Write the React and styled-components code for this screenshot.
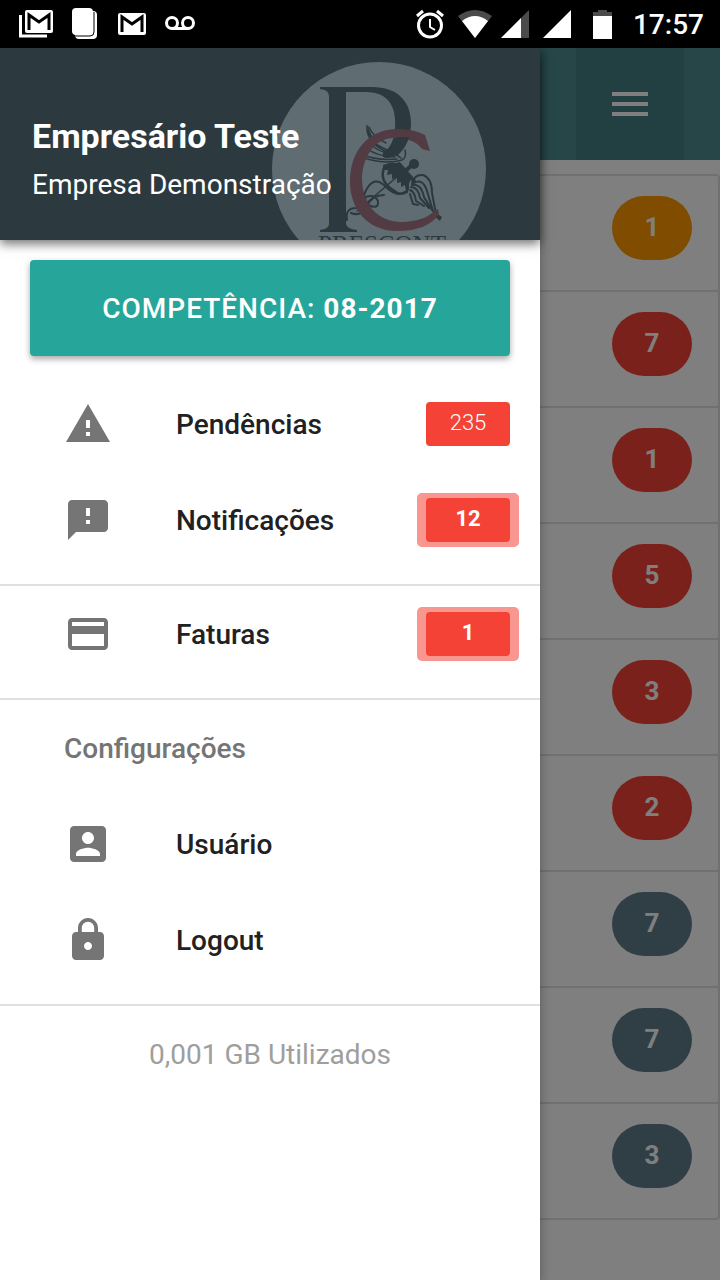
import React from "react";
import styled, { createGlobalStyle, css } from "styled-components";

const GlobalStyle = createGlobalStyle`
  * { box-sizing: border-box; }
  body {
    margin: 0;
    background: #fff;
    font-family: Roboto, "Liberation Sans", sans-serif;
    color: #212121;
  }
  ul { margin: 0; padding: 0; list-style: none; }
  h1, h2, p { margin: 0; }
`;

const Screen = styled.div`
  position: relative;
  display: flex;
  flex-direction: column;
  min-height: 100vh;
  overflow: hidden;
`;

const StatusBar = styled.header`
  display: flex;
  justify-content: space-between;
  align-items: center;
  height: 48px;
  padding: 0 16px 0 18px;
  background: #000;
  color: #fff;
  svg { display: block; }
`;

const StatusGroup = styled.div`
  display: flex;
  align-items: center;
  gap: ${(p) => p.$gap}px;
`;

const Clock = styled.time`
  font-size: 28px;
  line-height: 48px;
  padding-top: 2px;
  font-weight: 500;
`;

const Content = styled.div`
  position: relative;
  flex: 1;
  background: #fff;
`;

const NavBar = styled.nav`
  display: flex;
  justify-content: flex-end;
  height: 112px;
  padding-right: 36px;
  background: #4c8c90;
`;

const MenuButton = styled.button`
  display: flex;
  align-items: center;
  justify-content: center;
  width: 108px;
  border: 0;
  background: #447e83;
  color: #fff;
`;

const Collection = styled.ul`
  margin: 14px 0 0;
  border: 2px solid #e0e0e0;
  border-radius: 4px;
`;

const CollectionItem = styled.li`
  display: flex;
  justify-content: flex-end;
  align-items: flex-start;
  height: 116px;
  padding: 20px 26px 0;
  border-bottom: 2px solid #e0e0e0;
  &:last-child {
    height: 114px;
    border-bottom: 0;
  }
`;

const tones = { orange: "#ff9800", red: "#f44336", slate: "#607d8b" };

const CountPill = styled.span`
  width: 80px;
  height: 64px;
  border-radius: 32px;
  background: ${(p) => tones[p.$tone]};
  color: #fff;
  font-size: 26px;
  line-height: 62px;
  font-weight: 700;
  text-align: center;
`;

const Scrim = styled.div`
  position: absolute;
  inset: 0;
  background: rgba(0, 0, 0, 0.5);
`;

const Drawer = styled.aside`
  position: absolute;
  inset: 0 auto 0 0;
  width: 75%;
  background: #fff;
  box-shadow: 0 4px 10px rgba(0, 0, 0, 0.3);
`;

const Profile = styled.div`
  position: relative;
  height: 192px;
  padding: 64px 32px 0;
  background: #2c393f;
  color: #fff;
  box-shadow: 0 4px 10px rgba(0, 0, 0, 0.55);
`;

const Brand = styled.svg`
  position: absolute;
  right: 40px;
  bottom: 0;
  width: 240px;
  height: 192px;
`;

const ProfileName = styled.h1`
  position: relative;
  font-size: 34px;
  line-height: 48px;
  font-weight: 700;
`;

const ProfileCompany = styled.p`
  position: relative;
  font-size: 28px;
  line-height: 50px;
`;

const PeriodButton = styled.button`
  display: block;
  width: calc(100% - 60px);
  height: 96px;
  margin: 20px 30px;
  border: 0;
  border-radius: 4px;
  background: #26a69a;
  color: #fff;
  font-family: inherit;
  font-size: 28px;
  font-weight: 500;
  letter-spacing: 1px;
  text-transform: uppercase;
  box-shadow: 0 3px 6px rgba(0, 0, 0, 0.35);
  strong { font-weight: 700; }
`;

const MenuList = styled.ul`
  padding-bottom: 16px;
  border-bottom: 2px solid #e0e0e0;
`;

const MenuLink = styled.a`
  display: flex;
  align-items: center;
  isolation: isolate;
  height: 96px;
  padding: 0 30px 0 64px;
  color: #212121;
  font-size: 28px;
  font-weight: 500;
  text-decoration: none;
  svg { flex: none; width: 48px; height: 48px; margin-right: 64px; fill: #757575; }
`;

const Subheader = styled.h2`
  padding-left: 64px;
  color: #757575;
  font-size: 28px;
  line-height: 98px;
  height: 96px;
  font-weight: 500;
`;

const Badge = styled.span`
  width: 84px;
  height: 44px;
  margin-left: auto;
  border-radius: 4px;
  background: #f44336;
  color: #fff;
  font-size: 22px;
  line-height: 42px;
  font-weight: 300;
  text-align: center;
  ${(p) => p.$pulse && css`
    position: relative;
    font-weight: 700;
    &::before {
      content: "";
      position: absolute;
      inset: -5px -9px;
      z-index: -1;
      border-radius: 5px;
      background: #f8968f;
    }
  `}
`;

const Usage = styled.p`
  color: #9e9e9e;
  font-size: 28px;
  line-height: 98px;
  text-align: center;
`;

const icons = {
  warning: "M1 21h22L12 2 1 21zm12-3h-2v-2h2v2zm0-4h-2v-4h2v4z",
  feedback: "M20 2H4c-1.1 0-1.99.9-1.99 2L2 22l4-4h14c1.1 0 2-.9 2-2V4c0-1.1-.9-2-2-2zm-7 12h-2v-2h2v2zm0-4h-2V6h2v4z",
  card: "M20 4H4c-1.11 0-1.99.89-1.99 2L2 18c0 1.11.89 2 2 2h16c1.11 0 2-.89 2-2V6c0-1.11-.89-2-2-2zm0 14H4v-6h16v6zm0-10H4V6h16v2z",
  account: "M3 5v14c0 1.1.89 2 2 2h14c1.1 0 2-.9 2-2V5c0-1.1-.9-2-2-2H5c-1.11 0-2 .9-2 2zm12 4c0 1.66-1.34 3-3 3s-3-1.34-3-3 1.34-3 3-3 3 1.34 3 3zm-9 8c0-2 4-3.1 6-3.1s6 1.1 6 3.1v1H6v-1z",
  lock: "M18 8h-1V6c0-2.76-2.24-5-5-5S7 3.24 7 6v2H6c-1.1 0-2 .9-2 2v10c0 1.1.9 2 2 2h12c1.1 0 2-.9 2-2V10c0-1.1-.9-2-2-2zm-6 9c-1.1 0-2-.9-2-2s.9-2 2-2 2 .9 2 2-.9 2-2 2zm3.1-9H8.9V6c0-1.71 1.39-3.1 3.1-3.1 1.71 0 3.1 1.39 3.1 3.1v2z",
};

function MenuItem({ icon, label, count, pulse }) {
  return (
    <li>
      <MenuLink href="#">
        <svg viewBox="0 0 24 24" aria-hidden="true"><path d={icons[icon]} /></svg>
        {label}
        {count && <Badge $pulse={pulse}>{count}</Badge>}
      </MenuLink>
    </li>
  );
}

function NotificationIcons() {
  return (
    <StatusGroup $gap={16}>
      <svg width="36" height="30" viewBox="0 0 36 30" fill="none" aria-hidden="true">
        <path d="M2.5 6V27H29" stroke="#fff" strokeWidth="3" />
        <rect x="7" y="1" width="28" height="23" rx="2" fill="#fff" />
        <path d="M11 21V6l10 7 10-7v15" stroke="#000" strokeWidth="3" />
      </svg>
      <svg width="32" height="34" viewBox="0 0 32 34" aria-hidden="true">
        <path d="M5 4h18q4 0 4 4v20q0 4-4 4H9q-4 0-4-4z" fill="#fff" />
        <path d="M5 29h15q4 0 4-4V5" fill="none" stroke="#000" strokeWidth="1" />
        <rect x="2" y="1" width="21" height="27" rx="4" fill="#fff" />
      </svg>
      <svg width="28" height="24" viewBox="0 0 28 24" fill="none" aria-hidden="true">
        <rect y="1" width="28" height="22" rx="2" fill="#fff" />
        <path d="M4 20V5l10 7 10-7v15" stroke="#000" strokeWidth="3" />
      </svg>
      <svg width="36" height="24" viewBox="0 0 36 24" fill="none" stroke="#fff" strokeWidth="3" aria-hidden="true">
        <circle cx="10" cy="11" r="5.5" />
        <circle cx="26" cy="11" r="5.5" />
        <path d="M10 16.5h16" />
      </svg>
    </StatusGroup>
  );
}

function SystemIcons() {
  return (
    <StatusGroup $gap={8}>
      <svg width="34" height="30" viewBox="0 0 34 30" fill="none" stroke="#fff" strokeWidth="3" aria-hidden="true">
        <circle cx="15" cy="16.5" r="11.5" />
        <path d="M15 10v8l5 3" strokeWidth="2" />
        <path d="M2 7l6-5M28 7l-6-5" />
      </svg>
      <svg width="36" height="30" viewBox="0 0 36 30" aria-hidden="true">
        <path d="M18 29L1 7Q18-5 35 7z" fill="#4b4b4b" />
        <path d="M18 29L5 12Q18 2 31 12z" fill="#fff" />
      </svg>
      <svg width="34" height="30" viewBox="0 0 34 30" aria-hidden="true">
        <path d="M0 29L28 1v28z" fill="#4b4b4b" />
        <path d="M0 29L20 9v20z" fill="#fff" />
      </svg>
      <svg width="42" height="30" viewBox="1 0 42 30" aria-hidden="true">
        <path d="M1 29L29 1v28z" fill="#fff" />
      </svg>
      <svg width="32" height="30" viewBox="9 0 32 30" aria-hidden="true">
        <path d="M9 3h5V1h9v2h5v5H9z" fill="#4b4b4b" />
        <path d="M9 7h19v23H9z" fill="#fff" />
      </svg>
      <Clock>17:57</Clock>
    </StatusGroup>
  );
}

function BrandMark() {
  return (
    <Brand viewBox="260 48 240 192" aria-hidden="true">
      <circle cx="379" cy="169" r="107" fill="#5f6c72" />
      <path
        d="M320 87H372C398 87 411 102 411 123C411 140 402 157 387 158Q381 158 383 153Q393 147 395 130C397 106 388 92 366 92H346V224Q347 229 357 230V232H320V230Q329 229 329 224V96Q329 90 320 89z"
        fill="#2c393f"
      />
      <g fill="none" stroke="#2c393f" strokeWidth="1.5" strokeLinecap="round">
        <path d="M367 126Q366 140 381 147T401 158M369 127Q373 137 386 143M368 132Q369 144 387 152M369 141Q374 151 392 154M366 148Q378 157 395 157M361 154Q377 161 397 159M364 158Q386 165 402 160Q407 157 405 150" />
        <path d="M347 220Q345 208 356 208Q364 206 366 197M351 213Q361 217 366 207Q372 195 384 195M363 198Q374 193 378 201Q379 210 368 205Q360 199 368 187Q375 177 384 185Q396 198 407 192" strokeWidth="2" />
        <path d="M357 211L411 165" />
        <path d="M384 168Q379 181 393 190Q400 197 407 191Q410 185 403 179" strokeWidth="2.5" />
        <path d="M412 184Q414 174 423 175Q432 178 432 193L436 214M414 183Q423 178 427 191L433 211M412 185Q421 183 424 197L432 210M411 187Q418 187 420 198L429 208M410 190Q415 192 416 201L424 206M410 194L413 204L418 205" strokeWidth="2" />
        <path d="M399 164L414 181M400 176L412 165" strokeWidth="4" />
      </g>
      <path
        d="M383 165Q394 160 401 165L411 178L407 190Q405 190 405 185L401 187V182L397 183V178L392 179V174L387 175L388 170L383 170Z"
        fill="#2c393f"
      />
      <path d="M367 124L371 134L374 140L369 137ZM433 211L442 217L440 221L434 216Z" fill="#2c393f" />
      <circle cx="414" cy="164" r="5" fill="#2c393f" />
      <path
        d="M425 135L430 151L422 149Q415 138 392 138C372 140 362 160 362 180C363 205 378 222 402 222Q424 221 433 212L438 209L439 214Q428 231 397 231C366 231 350 207 350 182C350 152 367 130 396 129Q415 129 425 135Z"
        fill="#533b43"
      />
      <path d="M397 137Q395 147 386 153L397 156Q406 148 409 137Z" fill="#2c393f" />
      <text x="382" y="253" textAnchor="middle" fill="#2c393f" fontFamily="Liberation Serif, serif" fontSize="25">PRESCONT</text>
    </Brand>
  );
}

const rows = [
  [1, "orange"], [7, "red"], [1, "red"], [5, "red"], [3, "red"],
  [2, "red"], [7, "slate"], [7, "slate"], [3, "slate"],
];

export default function App() {
  return (
    <Screen>
      <GlobalStyle />
      <StatusBar>
        <NotificationIcons />
        <SystemIcons />
      </StatusBar>
      <Content>
        <NavBar>
          <MenuButton aria-label="Menu">
            <svg width="48" height="48" viewBox="0 0 24 24" fill="currentColor" aria-hidden="true">
              <path d="M3 18h18v-2H3v2zm0-5h18v-2H3v2zm0-7v2h18V6H3z" />
            </svg>
          </MenuButton>
        </NavBar>
        <Collection>
          {rows.map(([count, tone], i) => (
            <CollectionItem key={i}><CountPill $tone={tone}>{count}</CountPill></CollectionItem>
          ))}
        </Collection>
        <Scrim />
        <Drawer>
          <Profile>
            <BrandMark />
            <ProfileName>Empresário Teste</ProfileName>
            <ProfileCompany>Empresa Demonstração</ProfileCompany>
          </Profile>
          <PeriodButton>Competência: <strong>08-2017</strong></PeriodButton>
          <MenuList>
            <MenuItem icon="warning" label="Pendências" count="235" />
            <MenuItem icon="feedback" label="Notificações" count="12" pulse />
          </MenuList>
          <MenuList>
            <MenuItem icon="card" label="Faturas" count="1" pulse />
          </MenuList>
          <Subheader>Configurações</Subheader>
          <MenuList>
            <MenuItem icon="account" label="Usuário" />
            <MenuItem icon="lock" label="Logout" />
          </MenuList>
          <Usage>0,001 GB Utilizados</Usage>
        </Drawer>
      </Content>
    </Screen>
  );
}
